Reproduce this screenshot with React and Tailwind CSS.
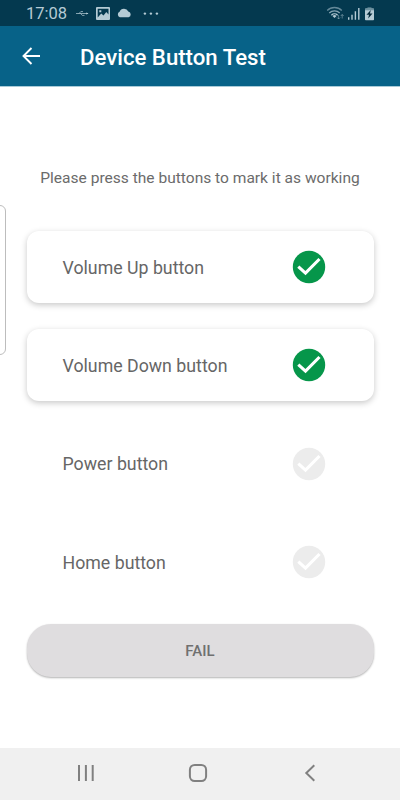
import { useState } from "react";

const BUTTONS = [
  { id: "volume-up", label: "Volume Up button", working: true },
  { id: "volume-down", label: "Volume Down button", working: true },
  { id: "power", label: "Power button", working: false },
  { id: "home", label: "Home button", working: false },
];

function CheckBadge({ working }) {
  return (
    <svg width="34" height="34" viewBox="0 0 34 34" className={working ? "text-[#06964a]" : "text-[#ececec]"}>
      <circle cx="17" cy="17" r="16.2" fill="currentColor" />
      <path d="M6.300 16.600 13.500 23.200 27.500 9" fill="none" stroke="#fff" strokeWidth="3.1" />
    </svg>
  );
}

function StatusBar() {
  return (
    <div className="flex h-[26px] items-center justify-between bg-[#04394f] pl-[26px] pr-[25px] text-[#b5cbd5]">
      <div className="flex items-center">
        <span className="w-[50px] text-[16.5px] leading-[26px] pt-[2px]">17:08</span>
        <svg width="84" height="26" viewBox="76 0 84 26" fill="currentColor">
          {/* usb */}
          <g stroke="currentColor" strokeWidth="0.9" fill="none" opacity="0.8">
            <path d="M76 13.500h12M79 13.500l1.800-1.900h2.200M80.500 13.500l1.800 1.900h2.200" />
          </g>
          <path d="M86.200 12.400 88.500 13.500 86.200 14.600z" />
          {/* image */}
          <path
            fillRule="evenodd"
            d="M97 7h12a1 1 0 0 1 1 1v11a1 1 0 0 1-1 1H97a1 1 0 0 1-1-1V8a1 1 0 0 1 1-1zM97.700 8.700v8.800l3.500-4 2.300 2.100 2.800-3.700 2.200 2.600V8.700zM99.300 10.200h2v2h-2z"
          />
          {/* cloud */}
          <path d="M119.800 17.200a2.900 2.900 0 0 1-.2-5.400 4.700 4.700 0 0 1 8.700-.4 3 3 0 0 1 .3 5.800z" />
          <circle cx="144.900" cy="13.600" r="1.200" />
          <circle cx="150.900" cy="13.600" r="1.200" />
          <circle cx="156.900" cy="13.600" r="1.200" />
        </svg>
      </div>
      <svg width="49" height="26" viewBox="326 0 49 26" fill="currentColor">
        {/* wifi */}
        <g fill="none" stroke="currentColor" strokeWidth="1.300">
          <path d="M327.200 10.500a10.400 10.400 0 0 1 14.600 0" opacity="0.55" />
          <path d="M329.300 13a7.300 7.300 0 0 1 10.400 0" opacity="0.75" />
          <path d="M331.400 15.200a4.400 4.400 0 0 1 6.200 0" />
        </g>
        <path d="M332.500 15.900a2.900 2.900 0 0 1 4 0l-2 2z" />
        <g stroke="currentColor" strokeWidth="0.9" fill="none" opacity="0.5">
          <path d="M338.600 15v4M337.100 17.500l1.500 1.500 1.500-1.500M342.200 18.500v-4M340.700 16l1.500-1.500 1.500 1.500" />
        </g>
        {/* signal */}
        <path d="M348 17.300h1.400v2.500H348zM351.300 14.700h1.400v5.100h-1.400zM354.700 11.300h1.400v8.500h-1.400zM358.100 8h1.400v11.800h-1.400z" />
        {/* battery */}
        <path d="M367.500 7.300h4v1.400h-4z" opacity="0.5" />
        <rect x="365" y="8.300" width="9" height="11.900" rx="0.8" />
        <path d="M365 8.300h9v2h-9z" fill="#04394f" opacity="0.4" />
        <path d="M370.800 10 366.500 14.800h2.500l-.8 3.600 4.300-4.900h-2.500z" fill="#04293a" />
      </svg>
    </div>
  );
}

function Header() {
  return (
    <header className="flex h-[61px] items-center border-b border-[#a9cbd8] bg-[#076288] text-white">
      <button className="ml-[21px] w-[59px]" aria-label="Back">
        <svg width="20" height="20" viewBox="0 0 20 20" fill="none" stroke="currentColor" strokeWidth="1.9">
          <path d="M19 10H2.500M10.500 2 2.500 10l8 8" />
        </svg>
      </button>
      <h1 className="pt-[4px] text-[22.2px] font-medium whitespace-nowrap">Device Button Test</h1>
    </header>
  );
}

function ButtonRow({ label, working }) {
  return (
    <div
      className={
        working
          ? "flex h-[72px] items-center justify-between rounded-[12px] bg-white pl-[36px] pr-[48px] shadow-[0_2px_6px_rgba(0,0,0,0.22)]"
          : "flex h-[72px] items-center justify-between pl-[36px] pr-[48px]"
      }
    >
      <span className="pt-[2px] text-[17.75px] text-[#666]">{label}</span>
      <CheckBadge working={working} />
    </div>
  );
}

function NavigationBar() {
  return (
    <nav className="flex h-[52px] items-center justify-between bg-[#f0f0f0] pl-[77px] pr-[81px] pb-[2px] text-[#808080]">
      <svg width="18" height="18" viewBox="0 0 18 18" fill="none" stroke="currentColor" strokeWidth="2">
        <path d="M2 1v16M8.900 1v16M15.700 1v16" />
      </svg>
      <svg width="20" height="20" viewBox="0 0 20 20" fill="none" stroke="currentColor" strokeWidth="2">
        <rect x="1.900" y="1.900" width="16.200" height="16.200" rx="4.800" />
      </svg>
      <svg width="18" height="18" viewBox="0 0 18 18" fill="none" stroke="currentColor" strokeWidth="2">
        <path d="M13.300 1.300 5.300 9l8 7.700" />
      </svg>
    </nav>
  );
}

function App() {
  const [buttons] = useState(BUTTONS);

  return (
    <div className="relative flex h-[800px] w-[400px] flex-col overflow-hidden bg-white font-['Roboto',sans-serif]">
      <StatusBar />
      <Header />

      <main className="flex flex-1 flex-col px-[26.5px] pt-[79px]">
        <p className="text-center text-[15.55px] leading-[24px] text-[#6b6b6b] whitespace-nowrap">
          Please press the buttons to mark it as working
        </p>
        <div className="mt-[41px] flex flex-col gap-[26.4px]">
          {buttons.map((button) => (
            <ButtonRow key={button.id} label={button.label} working={button.working} />
          ))}
        </div>
        <button className="mt-[26px] h-[53px] rounded-[24px] bg-[#dfdddf] pt-px text-[15px] font-medium text-[#707070] shadow-[0_1px_2px_rgba(0,0,0,0.3)]">
          FAIL
        </button>
      </main>

      <NavigationBar />

      {/* edge panel handle */}
      <div className="absolute top-[205px] -left-[10px] h-[150px] w-[16px] rounded-[6px] border border-[#bdbdbd] bg-white" />
    </div>
  );
}

export default App;
